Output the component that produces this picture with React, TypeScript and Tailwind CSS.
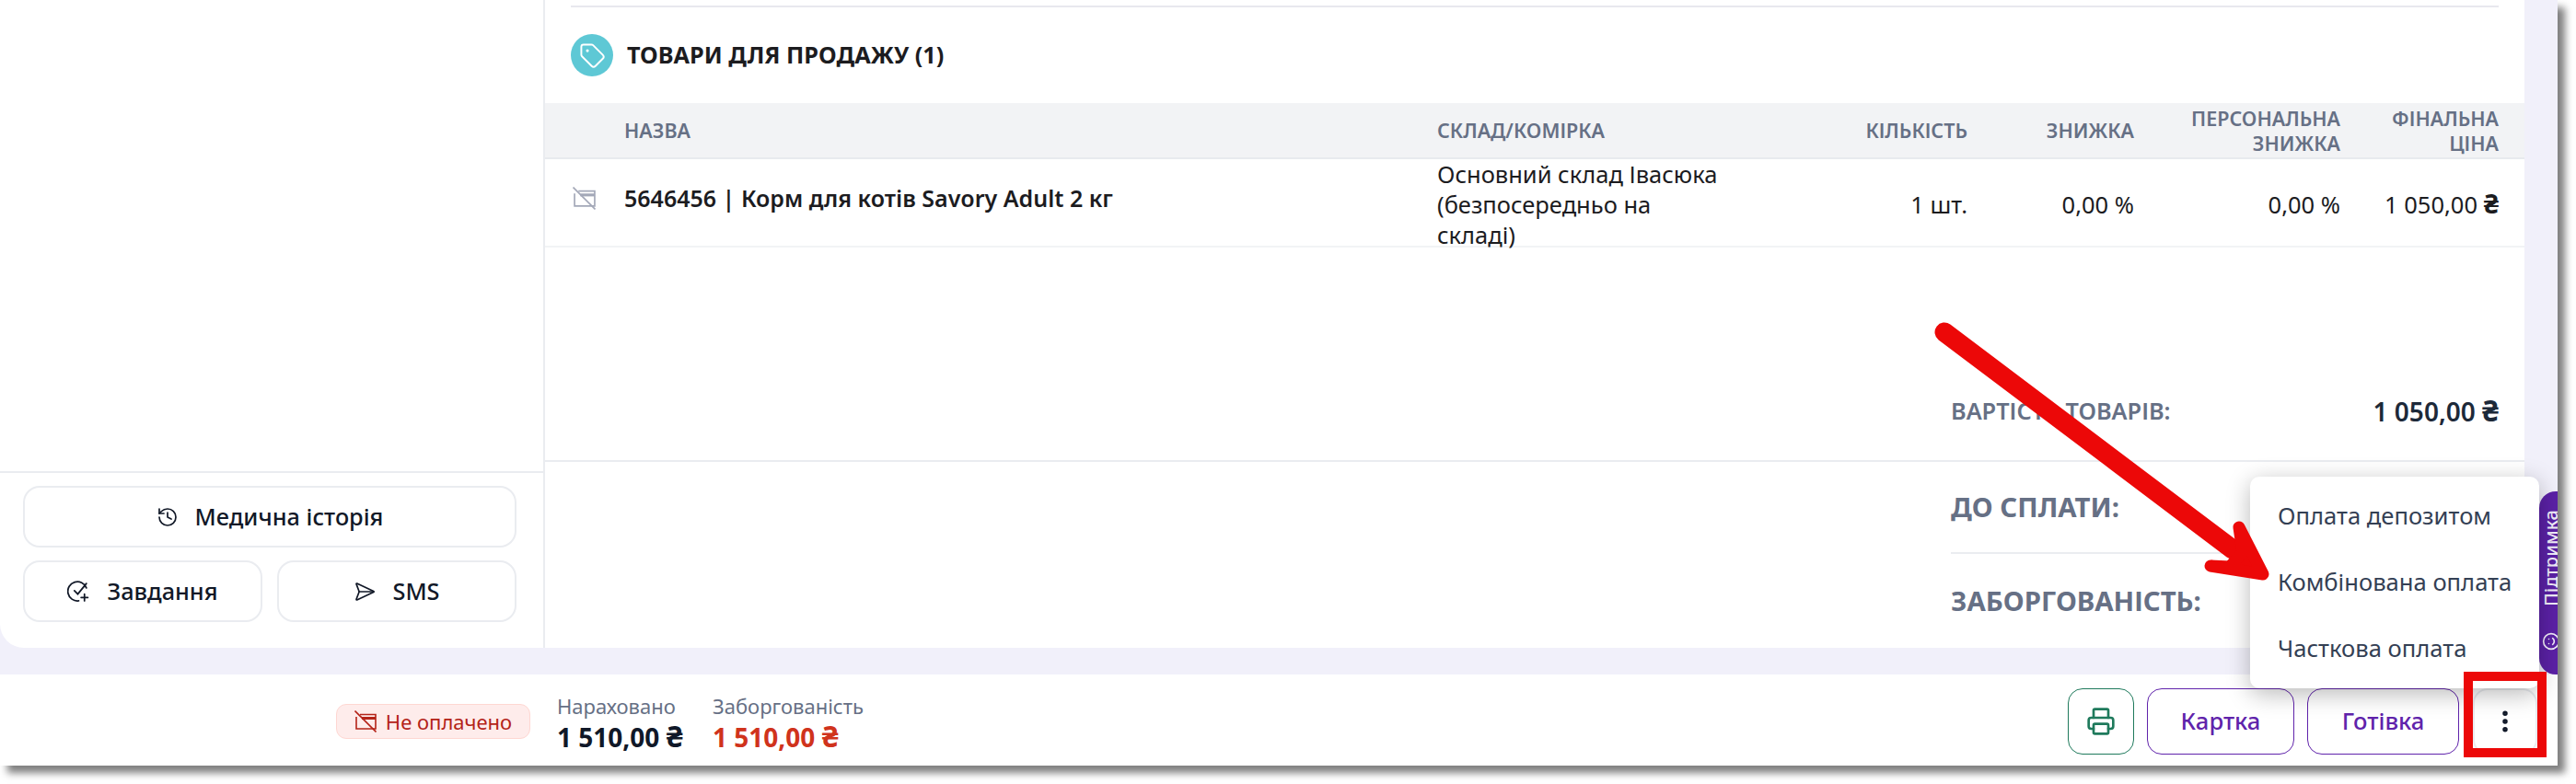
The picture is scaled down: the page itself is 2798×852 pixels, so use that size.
import type { ReactNode } from "react";
import { EllipsisVertical, History, Printer, SendHorizontal, Smile, Tag } from "lucide-react";

function CardOffIcon({ className }: { className: string }) {
  return (
    <svg viewBox="0 0 24 24" fill="none" stroke="currentColor" strokeWidth="1.6" className={className}>
      <path d="M6 4.5H23V20H2V7" />
      <path d="M8 8.5H23" strokeWidth="3" />
      <path d="M0.5 0.5L23.5 23.5" />
    </svg>
  );
}

function TaskIcon() {
  return (
    <svg viewBox="0 0 24 24" fill="none" stroke="currentColor" strokeWidth="1.7" strokeLinecap="round" className="h-[25px] w-[25px]">
      <path d="M20 8.5A10 10 0 1 0 12 22" />
      <path d="M7.5 11.5l3.5 3.5 9-11" />
      <path d="M18 15v7M14.5 18.5h7" />
    </svg>
  );
}

function Money({ value }: { value: string }) {
  return (
    <>
      {value} <span className="text-[1.12em] leading-none font-bold">₴</span>
    </>
  );
}

function SideButton({ icon, label, wide }: { icon: ReactNode; label: string; wide?: boolean }) {
  return (
    <button className={`flex h-[67px] items-center justify-center gap-[18px] rounded-[18px] border-2 border-[#eaecf0] bg-white text-[25.3px] font-medium text-[#111827] ${wide ? "col-span-2" : ""}`}>
      {icon}
      {label}
    </button>
  );
}

function HeadCell({ children, right }: { children: ReactNode; right?: boolean }) {
  return <div className={`text-[21.5px] leading-[27px] font-semibold text-[#667085] ${right ? "text-right" : ""}`}>{children}</div>;
}

function Arrow() {
  return (
    <svg className="pointer-events-none absolute top-0 left-0 z-30" width="2778" height="832" viewBox="0 0 2778 832">
      <line x1="2112" y1="361" x2="2425" y2="597" stroke="#ec0808" strokeWidth="21" strokeLinecap="round" />
      <path
        d="M2458 624L2432 573L2436 600L2422 616L2401 615Z"
        fill="#ec0808"
        stroke="#ec0808"
        strokeWidth="13"
        strokeLinejoin="round"
      />
    </svg>
  );
}

export default function App() {
  return (
    <div className="h-[852px] w-[2798px] overflow-hidden bg-white font-['Noto_Sans',sans-serif]">
      <div className="relative flex h-[832px] w-[2778px] flex-col bg-[#f1f0fa] shadow-[8px_8px_8px_rgba(0,0,0,0.5)]">
        <main className="flex h-[733px] pr-[36px] pb-[29px]">
          <aside className="flex w-[590px] flex-col justify-end rounded-bl-[26px] bg-white">
            <div className="grid grid-cols-2 gap-x-[16px] gap-y-[14px] border-t-2 border-[#eaecf0] pt-[14px] pr-[29px] pb-[28px] pl-[25px]">
              <SideButton wide icon={<History className="h-[24px] w-[24px]" strokeWidth={1.7} />} label="Медична історія" />
              <SideButton icon={<TaskIcon />} label="Завдання" />
              <SideButton icon={<SendHorizontal className="h-[24px] w-[24px]" strokeWidth={1.7} />} label="SMS" />
            </div>
          </aside>

          <section className="flex min-w-0 flex-1 flex-col border-l-2 border-[#eaecf0] bg-white">
            <div className="mt-[6px] mr-[28px] ml-[28px] h-[2px] bg-[#e8e8ee]" />
            <div className="flex items-center gap-[15px] pt-[29px] pb-[29px] pl-[28px]">
              <span className="flex h-[46px] w-[46px] items-center justify-center rounded-full bg-[#5ec8d5] text-white">
                <Tag className="h-[29px] w-[29px]" strokeWidth={1.6} />
              </span>
              <h2 className="text-[25.3px] font-bold text-[#1c1c1f]">ТОВАРИ ДЛЯ ПРОДАЖУ (1)</h2>
            </div>

            <div className="grid h-[61px] grid-cols-[86px_883px_330px_246px_181px_224px_172px] items-center border-b-2 border-[#e8eaee] bg-[#f2f3f5] pr-[28px]">
              <div />
              <HeadCell>НАЗВА</HeadCell>
              <HeadCell>СКЛАД/КОМІРКА</HeadCell>
              <HeadCell right>КІЛЬКІСТЬ</HeadCell>
              <HeadCell right>ЗНИЖКА</HeadCell>
              <HeadCell right>ПЕРСОНАЛЬНА<br />ЗНИЖКА</HeadCell>
              <HeadCell right>ФІНАЛЬНА<br />ЦІНА</HeadCell>
            </div>
            <div className="grid h-[96px] grid-cols-[86px_883px_330px_246px_181px_224px_172px] items-center border-b-2 border-[#f2f3f5] pr-[28px] text-[25.5px] text-[#1c1c1f]">
              <div className="mb-[14px] pl-[30px] text-[#a3a8b8]">
                <CardOffIcon className="h-[25px] w-[25px]" />
              </div>
              <div className="mb-[14px] text-[25px] font-semibold">5646456 | Корм для котів Savory Adult 2 кг</div>
              <div className="pr-[10px] leading-[33px]">Основний склад Івасюка (безпосередньо на складі)</div>
              <div className="text-right">1 шт.</div>
              <div className="text-right">0,00 %</div>
              <div className="text-right">0,00 %</div>
              <div className="text-right"><Money value="1 050,00" /></div>
            </div>

            <div className="flex-1" />
            <div className="mr-[28px] ml-[1527px] flex h-[106px] items-center justify-between">
              <span className="text-[25.3px] font-semibold text-[#667085]">ВАРТІСТЬ ТОВАРІВ:</span>
              <span className="text-[28px] font-semibold text-[#1d2939]"><Money value="1 050,00" /></span>
            </div>
            <div className="h-[2px] bg-[#eaecf0]" />
            <div className="mr-[28px] ml-[1527px] flex h-[100px] items-center border-b-2 border-[#eaecf0] text-[29.4px] font-bold text-[#667085]">
              ДО СПЛАТИ:
            </div>
            <div className="mr-[28px] ml-[1527px] flex h-[102px] items-center text-[29.4px] font-bold text-[#667085]">
              ЗАБОРГОВАНІСТЬ:
            </div>
          </section>
        </main>

        <footer className="flex h-[99px] items-center bg-white pt-[3px] pr-[22px] pl-[365px]">
          <div className="flex h-[38px] w-[211px] items-center justify-center gap-[10px] rounded-[11px] border-[1.5px] border-[#fed7d2] bg-[#feeceb] text-[22px] text-[#b42318]">
            <CardOffIcon className="h-[24px] w-[24px]" />
            Не оплачено
          </div>
          <div className="ml-[29px] flex w-[169px] flex-col">
            <span className="text-[22px] leading-[34px] text-[#667085]">Нараховано</span>
            <span className="text-[28px] leading-[34px] font-bold text-[#101828]"><Money value="1 510,00" /></span>
          </div>
          <div className="flex flex-col">
            <span className="text-[22px] leading-[34px] text-[#667085]">Заборгованість</span>
            <span className="text-[28px] leading-[34px] font-bold text-[#d0331c]"><Money value="1 510,00" /></span>
          </div>

          <div className="ml-auto flex items-center gap-[14px]">
            <button className="flex h-[72px] w-[72px] items-center justify-center rounded-[16px] border-[1.5px] border-[#1f7a5c] text-[#1f7a5c]">
              <Printer className="h-[32px] w-[32px]" strokeWidth={2} />
            </button>
            <button className="h-[72px] w-[160px] rounded-[16px] border-[1.5px] border-[#6023ab] text-[25.6px] font-medium text-[#6023ab]">Картка</button>
            <button className="h-[72px] w-[165px] rounded-[16px] border-[1.5px] border-[#6023ab] text-[25.6px] font-medium text-[#6023ab]">Готівка</button>
            <button className="ml-px flex h-[72px] w-[70px] items-center justify-center rounded-[16px] border-2 border-[#eaecf0] text-[#101828]">
              <EllipsisVertical className="h-[30px] w-[30px]" strokeWidth={2.4} />
            </button>
          </div>
        </footer>

        <div className="absolute top-[534px] right-0 flex h-[199px] w-[20px] overflow-hidden rounded-l-[18px] bg-[#5b21a6]">
          <div className="flex h-full w-[26px] shrink-0 rotate-180 items-center gap-[28px] pt-[26px] text-[#f1edfa] [writing-mode:vertical-rl]">
            <Smile className="h-[20px] w-[20px] rotate-90" strokeWidth={2} />
            <span className="text-[20px] leading-[26px] font-medium">Підтримка</span>
          </div>
        </div>

        <div className="absolute top-[518px] left-[2444px] z-20 flex h-[230px] w-[314px] flex-col justify-center rounded-[10px] bg-white text-[25.6px] text-[#344054] shadow-[0_6px_26px_rgba(0,0,0,0.28)]">
          <div className="flex h-[72px] items-center pl-[30px]">Оплата депозитом</div>
          <div className="flex h-[72px] items-center pl-[30px]">Комбінована оплата</div>
          <div className="flex h-[72px] items-center pl-[30px]">Часткова оплата</div>
        </div>

        <div className="absolute top-[730px] left-[2676px] z-30 h-[93px] w-[90px] border-[10px] border-[#ec0808]" />
        <Arrow />
      </div>
    </div>
  );
}
